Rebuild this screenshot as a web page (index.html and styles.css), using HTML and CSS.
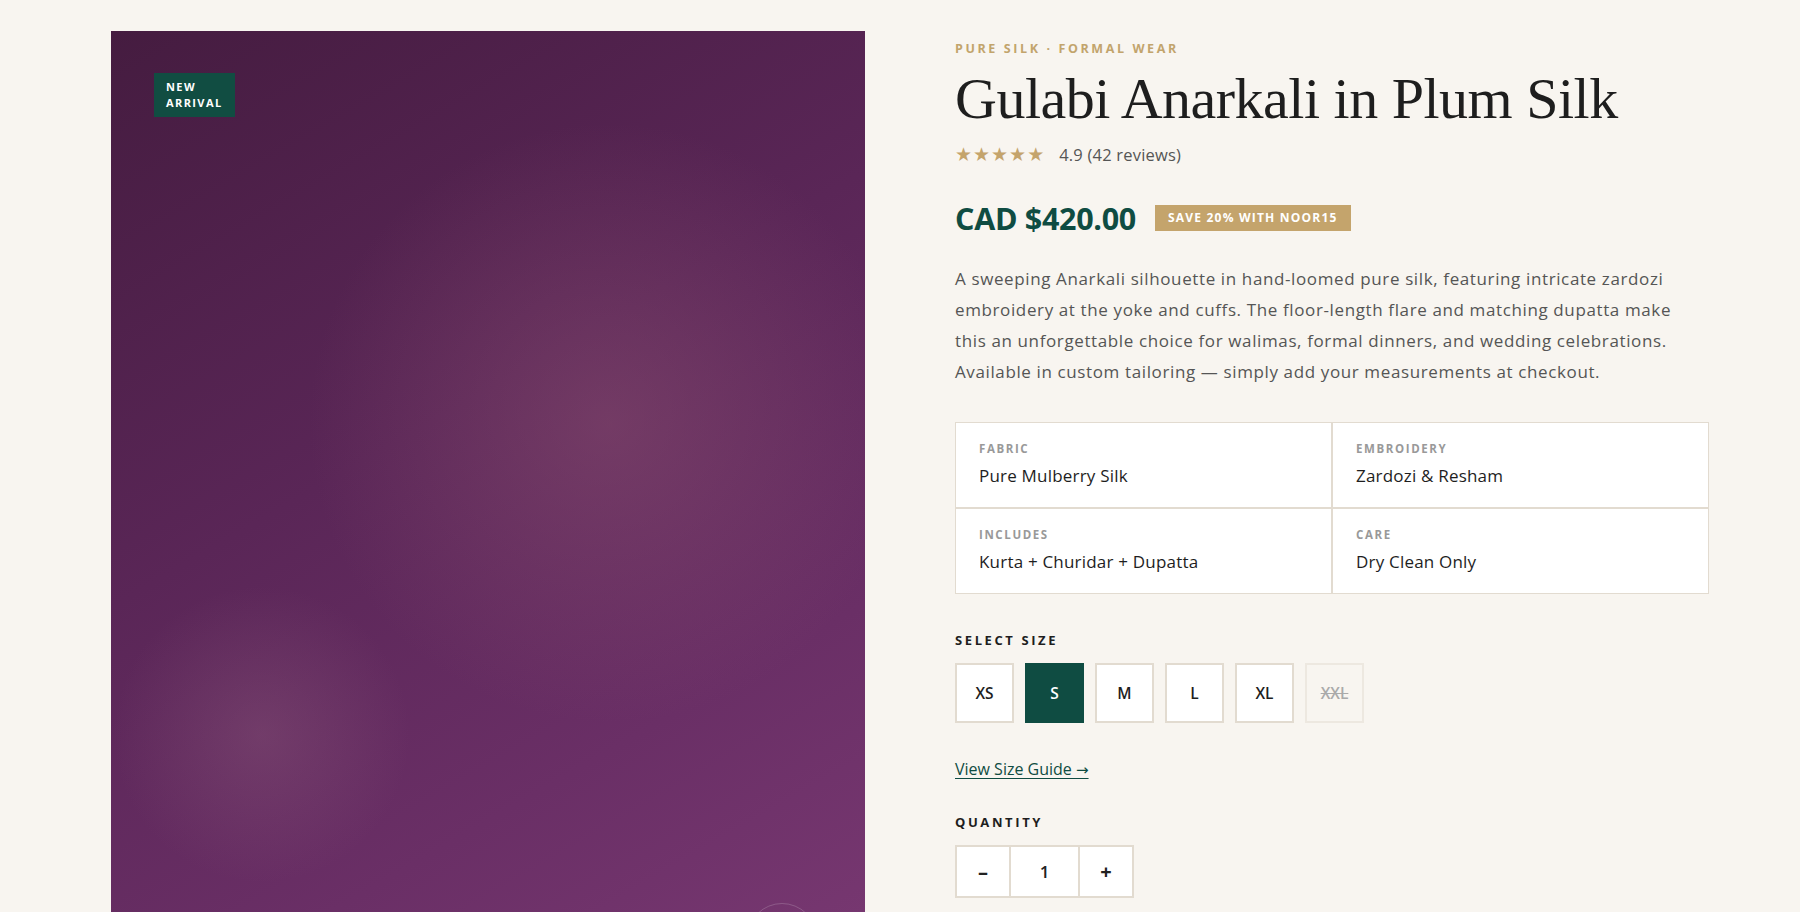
FILE: index.html
```html
<!DOCTYPE html>
<html lang="en">
<head>
    <meta charset="UTF-8">
    <meta name="viewport" content="width=device-width, initial-scale=1.0">
    <title>Gulabi Anarkali in Plum Silk</title>
    <link rel="stylesheet" href="styles.css">
</head>
<body>
    <main class="product">
        <div class="gallery">
            <div class="photo">
                <span class="badge">NEW ARRIVAL</span>
                <span class="ring"></span>
            </div>
        </div>

        <div class="info">
            <div class="eyebrow">PURE SILK · FORMAL WEAR</div>
            <h1 class="title">Gulabi Anarkali in Plum Silk</h1>
            <div class="rating">
                <span class="stars">★★★★★</span>
                <span class="rating-text">4.9 (42 reviews)</span>
            </div>

            <div class="price-row">
                <span class="price">CAD $420.00</span>
                <span class="promo">SAVE 20% WITH NOOR15</span>
            </div>

            <p class="desc">A sweeping Anarkali silhouette in hand-loomed pure silk, featuring intricate zardozi embroidery at the yoke and cuffs. The floor-length flare and matching dupatta make this an unforgettable choice for walimas, formal dinners, and wedding celebrations. Available in custom tailoring — simply add your measurements at checkout.</p>

            <div class="specs">
                <div class="spec">
                    <div class="spec-label">FABRIC</div>
                    <div class="spec-value">Pure Mulberry Silk</div>
                </div>
                <div class="spec">
                    <div class="spec-label">EMBROIDERY</div>
                    <div class="spec-value">Zardozi &amp; Resham</div>
                </div>
                <div class="spec">
                    <div class="spec-label">INCLUDES</div>
                    <div class="spec-value">Kurta + Churidar + Dupatta</div>
                </div>
                <div class="spec">
                    <div class="spec-label">CARE</div>
                    <div class="spec-value">Dry Clean Only</div>
                </div>
            </div>

            <div class="field-label">SELECT SIZE</div>
            <div class="sizes">
                <div class="size">XS</div>
                <div class="size active">S</div>
                <div class="size">M</div>
                <div class="size">L</div>
                <div class="size">XL</div>
                <div class="size sold-out">XXL</div>
            </div>

            <a class="size-guide" href="#">View Size Guide <span class="arrow">→</span></a>

            <div class="field-label qty-label">QUANTITY</div>
            <div class="qty">
                <div class="qty-btn">–</div>
                <div class="qty-num">1</div>
                <div class="qty-btn">+</div>
            </div>
        </div>
    </main>
</body>
</html>
```

FILE: styles.css
```css
* {
    padding: 0;
    margin: 0;
    box-sizing: border-box;
}
body {
    background-color: #f8f5f0;
    font-family: "Open Sans", "Noto Sans", sans-serif;
    color: #222;
    overflow: hidden;
}
.product {
    display: grid;
    grid-template-columns: 754px 754px;
    column-gap: 90px;
    padding: 31px 0 0 111px;
}
.photo {
    position: relative;
    height: 1005px;
    background:
        radial-gradient(circle at 66% 39%, rgba(145, 85, 115, 0.42), rgba(145, 85, 115, 0) 38%),
        radial-gradient(circle at 20% 70%, rgba(150, 100, 130, 0.3), rgba(150, 100, 130, 0) 16%),
        linear-gradient(150deg, #451c40 0%, #5a2657 40%, #6a2f66 70%, #7b3a74 100%);
    overflow: hidden;
}
.badge {
    position: absolute;
    top: 42px;
    left: 43px;
    width: min-content;
    padding: 6px 12px 6px;
    background-color: #114d42;
    color: #fff;
    font-size: 11px;
    font-weight: 700;
    letter-spacing: 1.4px;
    line-height: 16px;
}
.ring {
    position: absolute;
    left: 636px;
    top: 872px;
    width: 70px;
    height: 70px;
    border: 1px solid rgba(255, 255, 255, 0.18);
    border-radius: 50%;
}
.info {
    padding-top: 8px;
}
.eyebrow {
    font-size: 12.5px;
    line-height: 20px;
    font-weight: 700;
    letter-spacing: 2.6px;
    color: #c2a46c;
}
.title {
    margin-top: 8px;
    font-family: "Liberation Serif", serif;
    font-weight: 400;
    font-size: 58px;
    line-height: 64px;
    letter-spacing: -0.5px;
    color: #1e1e1e;
}
.rating {
    margin-top: 11px;
    display: flex;
    align-items: center;
    height: 24px;
}
.stars {
    color: #c4a46c;
    font-size: 19px;
    letter-spacing: 1px;
    font-family: "DejaVu Sans", sans-serif;
}
.rating-text {
    margin-left: 14px;
    font-size: 16.5px;
    letter-spacing: 0.2px;
    color: #555;
}
.price-row {
    margin-top: 35px;
    display: flex;
    align-items: center;
    height: 34px;
}
.price {
    font-size: 30.5px;
    font-weight: 700;
    color: #0f4c42;
    letter-spacing: -0.3px;
}
.promo {
    margin-left: 19px;
    height: 26px;
    line-height: 26px;
    padding: 0 13px;
    background-color: #c4a46c;
    color: #fff;
    font-size: 12px;
    font-weight: 700;
    letter-spacing: 1.2px;
}
.desc {
    margin-top: 28px;
    font-size: 17px;
    letter-spacing: 0.62px;
    line-height: 31px;
    color: #555;
    max-width: 738px;
}
.specs {
    margin-top: 35px;
    display: grid;
    grid-template-columns: 1fr 1fr;
    gap: 2px;
    background-color: #e2dbd0;
    border: 1px solid #e2dbd0;
}
.spec {
    background-color: #fff;
    padding: 18px 23px 19px;
}
.spec-label {
    font-size: 11.5px;
    line-height: 16px;
    font-weight: 700;
    letter-spacing: 1.6px;
    color: #999;
}
.spec-value {
    margin-top: 7px;
    font-size: 17px;
    letter-spacing: 0.2px;
    line-height: 24px;
    font-weight: 500;
    color: #1e1e1e;
}
.field-label {
    margin-top: 36px;
    font-size: 13px;
    line-height: 20px;
    font-weight: 700;
    letter-spacing: 2.6px;
    color: #1e1e1e;
}
.sizes {
    margin-top: 13px;
    display: flex;
    gap: 11px;
}
.size {
    width: 59px;
    height: 60px;
    display: flex;
    align-items: center;
    justify-content: center;
    background-color: #fff;
    border: 2px solid #e2dbd0;
    font-size: 15.5px;
    font-weight: 600;
    color: #1e1e1e;
}
.size.active {
    background-color: #0f4c42;
    border-color: #0f4c42;
    color: #fff;
}
.size.sold-out {
    background-color: #f8f5f0;
    border-color: #ede8e0;
    color: #aaa;
    text-decoration: line-through;
}
.size-guide {
    display: inline-block;
    margin-top: 35px;
    font-size: 16px;
    line-height: 22px;
    color: #0f4c42;
    text-decoration: underline;
    text-underline-offset: 3px;
}
.arrow {
    font-family: "DejaVu Sans", sans-serif;
    font-size: 15px;
}
.qty-label {
    margin-top: 31px;
}
.qty {
    margin-top: 13px;
    display: flex;
    width: 179px;
    height: 53px;
    border: 2px solid #e2dbd0;
    background-color: #fff;
}
.qty-btn,
.qty-num {
    display: flex;
    align-items: center;
    justify-content: center;
    font-size: 20px;
    font-weight: 700;
}
.qty-btn {
    width: 52px;
}
.qty-num {
    width: 71px;
    border-left: 2px solid #e2dbd0;
    border-right: 2px solid #e2dbd0;
    font-size: 17px;
    font-weight: 600;
}
```
